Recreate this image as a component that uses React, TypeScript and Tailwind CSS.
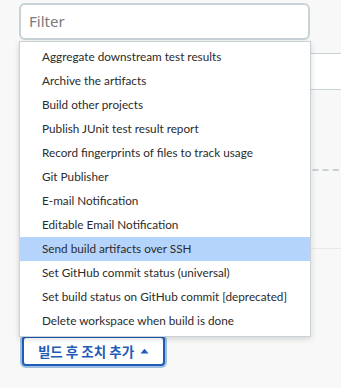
import React from "react";

const items = [
  "Aggregate downstream test results",
  "Archive the artifacts",
  "Build other projects",
  "Publish JUnit test result report",
  "Record fingerprints of files to track usage",
  "Git Publisher",
  "E-mail Notification",
  "Editable Email Notification",
  "Send build artifacts over SSH",
  "Set GitHub commit status (universal)",
  "Set build status on GitHub commit [deprecated]",
  "Delete workspace when build is done",
];

export default function App() {
  return (
    <div
      className="relative w-[341px] h-[388px] overflow-hidden bg-[#f8f8f8]"
      style={{ fontFamily: 'Lato, "Noto Sans", sans-serif' }}
    >
      <div className="flex flex-col pl-[19px] pt-[3px]">
        {/* filter input */}
        <div className="w-[291px] h-[37px] rounded-[6px] border-2 border-[#c9d3d7] bg-white flex items-center pl-[8px]">
          <span className="text-[15px] text-[#7a7a7a]" style={{ fontFamily: '"Noto Sans", sans-serif' }}>
            Filter
          </span>
        </div>
        {/* underlying form content */}
        <div className="mt-[13px] h-[37px] w-[340px] border-y border-[#c8d1d5] bg-white" />
        <div className="mt-[79px] w-[340px] border-t-2 border-dashed border-[#c8d1d5]" />
        <div className="mt-[77px] w-[340px] border-t border-[#e6e9eb]" />
        {/* button */}
        <div className="mt-[85px] ml-[1px] self-start rounded-[6px] p-[2px] bg-[#9dbde0]">
          <div
            className="h-[30px] w-[143px] rounded-[4px] border-2 border-[#1f5cb8] bg-white flex items-center justify-center gap-[6px] text-[13.5px] font-semibold text-[#1f5cb8]"
            style={{ fontFamily: '"Noto Sans CJK KR", "Noto Sans", sans-serif' }}
          >
            <span>빌드 후 조치 추가</span>
            <svg width="9" height="6" viewBox="0 0 9 6">
              <path d="M0.5 5.5 L4.5 0.8 L8.5 5.5 Z" fill="#1f5cb8" />
            </svg>
          </div>
        </div>
      </div>

      {/* dropdown menu overlay */}
      <div className="absolute left-[19px] top-[41px] w-[292px] bg-white border border-[#c9d3d7] shadow-[0_2px_6px_rgba(0,0,0,0.15)] py-[3px] flex flex-col">
        {items.map((t, i) => (
          <div
            key={i}
            className={
              "h-[24px] flex items-center pl-[22px] text-[11.75px] text-[#2b2b2b] whitespace-nowrap " +
              (i === 8 ? "bg-[#b5d4fb]" : "")
            }
          >
            {t}
          </div>
        ))}
      </div>
    </div>
  );
}
